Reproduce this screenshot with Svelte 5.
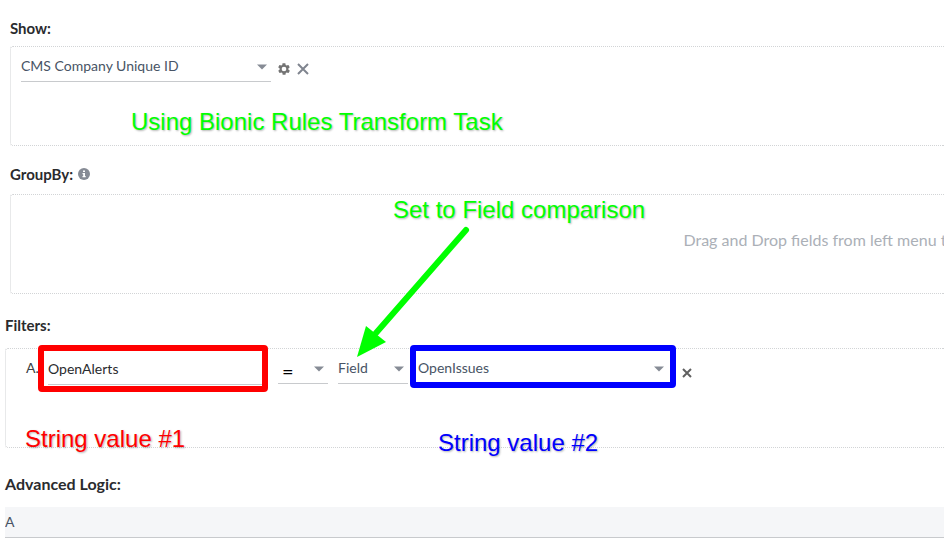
<script lang="ts">
    let showField = $state("CMS Company Unique ID");
    let filterName = $state("OpenAlerts");
    let operator = $state("=");
    let compareTo = $state("Field");
    let compareField = $state("OpenIssues");
    let logic = $state("A");
</script>

{#snippet caret()}
    <svg class="caret" width="10" height="6" viewBox="0 0 10 6" aria-hidden="true">
        <path d="M0 0.5h10L5 5.5z" />
    </svg>
{/snippet}

{#snippet cross(size: number)}
    <svg width={size} height={size} viewBox="0 0 {size} {size}" aria-hidden="true">
        <path d="M1 1L{size - 1} {size - 1}M{size - 1} 1L1 {size - 1}" />
    </svg>
{/snippet}

<main>
    <section class="show">
        <h2>Show:</h2>
        <div class="panel">
            <div class="row">
                <div class="select wide">
                    <select bind:value={showField} aria-label="Show field">
                        <option>CMS Company Unique ID</option>
                    </select>
                    {@render caret()}
                </div>
                <div class="actions">
                    <button class="gear" aria-label="Field settings">
                        <svg width="14" height="14" viewBox="0 0 24 24" aria-hidden="true">
                            <path
                                fill-rule="evenodd"
                                d="M19.4 13c0-.3.1-.6.1-1s0-.7-.1-1l2.1-1.6c.2-.2.3-.4.1-.7l-2-3.4c-.1-.2-.4-.3-.6-.2l-2.5 1c-.5-.4-1.1-.7-1.7-1l-.4-2.6c0-.3-.2-.5-.5-.5h-4c-.2 0-.5.2-.5.4l-.4 2.7c-.6.2-1.1.6-1.7 1L4.9 5.1c-.2-.1-.5 0-.6.2l-2 3.4c-.1.3 0 .6.1.7L4.6 11c0 .3-.1.6-.1 1s0 .7.1 1l-2.1 1.6c-.2.2-.3.4-.1.7l2 3.4c.1.2.4.3.6.2l2.5-1c.5.4 1.1.7 1.7 1l.4 2.6c0 .3.2.5.5.5h4c.3 0 .5-.2.5-.4l.4-2.7c.6-.2 1.2-.6 1.7-1l2.5 1c.2.1.5 0 .6-.2l2-3.4c.1-.2.1-.5-.1-.7zM12 16a4 4 0 1 1 0-8 4 4 0 0 1 0 8z"
                            />
                        </svg>
                    </button>
                    <button class="remove" aria-label="Remove field">{@render cross(12)}</button>
                </div>
            </div>
        </div>
    </section>

    <section class="group">
        <h2>
            GroupBy:
            <svg width="12" height="12" viewBox="0 0 12 12" aria-hidden="true">
                <circle cx="6" cy="6" r="6" fill="#868b95" />
                <path d="M5 2.5h2V4H5zM4.5 5H7v3h.7v1.2H4.5V8h.7V6.2h-.7z" fill="#fff" />
            </svg>
        </h2>
        <div class="panel drop">
            <p>Drag and Drop fields from left menu to</p>
        </div>
    </section>

    <section class="filters">
        <h2>Filters:</h2>
        <div class="panel">
            <div class="row">
                <label for="filter-a">A.</label>
                <input id="filter-a" type="text" bind:value={filterName} />
                <div class="select operator">
                    <select bind:value={operator} aria-label="Operator">
                        <option>=</option>
                    </select>
                    {@render caret()}
                </div>
                <div class="select kind">
                    <select bind:value={compareTo} aria-label="Compare to">
                        <option>Field</option>
                    </select>
                    {@render caret()}
                </div>
                <div class="select wide">
                    <select bind:value={compareField} aria-label="Comparison field">
                        <option>OpenIssues</option>
                    </select>
                    {@render caret()}
                </div>
                <button class="remove bold" aria-label="Remove filter">{@render cross(10)}</button>
            </div>
        </div>
    </section>

    <section class="logic">
        <h2><label for="logic">Advanced Logic:</label></h2>
        <input id="logic" type="text" bind:value={logic} />
    </section>

    <!-- callouts drawn over the form -->
    <div class="note task">Using Bionic Rules Transform Task</div>
    <div class="note comparison">Set to Field comparison</div>
    <div class="note first">String value #1</div>
    <div class="note second">String value #2</div>
    <div class="frame red"></div>
    <div class="frame blue"></div>
    <svg class="arrow" width="120" height="136" viewBox="0 0 120 136" aria-hidden="true">
        <path d="M116 8L26 111" stroke="#0f0" stroke-width="6" stroke-linecap="round" />
        <path d="M7 135l9-31 20 16z" fill="#0f0" />
    </svg>
</main>

<style>
    :global(body) {
        margin: 0;
        background: #fff;
    }
    main {
        position: relative;
        padding-top: 18px;
        overflow: hidden;
        font-family: Lato, "Open Sans", sans-serif;
        font-size: 14px;
        color: #485465;
    }
    h2 {
        display: flex;
        align-items: center;
        gap: 5px;
        margin: 0;
        font-size: 15px;
        line-height: 20px;
        font-weight: 700;
        color: #2a2b2e;
    }
    .panel {
        box-sizing: border-box;
        height: 100px;
        padding: 5px 0 0 10px;
        border: 1px dotted #d2d4d6;
        border-right: none;
        border-radius: 3px 0 0 3px;
    }
    .show,
    .group {
        margin-left: 10px;
    }
    .filters,
    .logic {
        margin-left: 5px;
    }
    .show .panel {
        margin: 8px 0 18px;
    }
    .group .panel {
        margin: 10px 0 21px;
    }
    .filters .panel {
        margin: 13px 0 26px;
        padding-left: 20px;
    }
    .drop {
        display: flex;
        align-items: center;
        padding: 0 0 8px 72%;
    }
    .drop p {
        margin: 0;
        font-size: 16px;
        line-height: 20px;
        white-space: nowrap;
        color: #abb0b7;
    }
    .row {
        display: flex;
        align-items: flex-start;
        gap: 10px;
    }
    .row label {
        width: 12px;
        line-height: 28px;
        color: #3c3f45;
    }
    select,
    input {
        box-sizing: border-box;
        display: block;
        width: 100%;
        height: 30px;
        margin: 0;
        padding: 0 0 2px;
        border: none;
        border-bottom: 1px solid #c8cacd;
        border-radius: 0;
        background: transparent;
        font: inherit;
        color: inherit;
        outline: none;
        appearance: none;
    }
    .select {
        position: relative;
        flex: none;
    }
    .wide {
        width: 250px;
    }
    .operator {
        width: 50px;
    }
    .operator select {
        padding: 4px 0 0 4px;
        font-size: 20px;
        color: #000;
    }
    .kind {
        width: 70px;
    }
    .caret {
        position: absolute;
        top: 12px;
        right: 4px;
        fill: #868b95;
        pointer-events: none;
    }
    .row input {
        flex: none;
        width: 220px;
        height: 31px;
        color: #2a2b2e;
    }
    button {
        display: flex;
        align-items: center;
        padding: 0;
        border: none;
        background: none;
    }
    .actions {
        display: flex;
        align-items: center;
        gap: 6px;
        height: 34px;
        margin-left: -4px;
    }
    .gear {
        fill: #747474;
    }
    .remove {
        stroke: #80858f;
        stroke-width: 2;
    }
    .bold {
        height: 38px;
        margin-left: 4px;
        stroke: #606060;
    }
    .logic h2 {
        font-size: 16px;
    }
    .logic input {
        height: 31px;
        margin-top: 13px;
        background: #f5f6f8;
    }
    .note {
        position: absolute;
        font-family: "Liberation Sans", Arial, sans-serif;
        font-size: 24px;
        line-height: 28px;
        white-space: nowrap;
        text-shadow: 1px 1px 2px rgba(0, 0, 0, 0.3);
    }
    .task {
        top: 108px;
        left: 131px;
        color: #0f0;
    }
    .comparison {
        top: 196px;
        left: 393px;
        color: #0f0;
    }
    .first {
        top: 425px;
        left: 25px;
        color: #f00;
    }
    .second {
        top: 429px;
        left: 438px;
        color: #00f;
    }
    .frame {
        position: absolute;
        box-sizing: border-box;
        top: 345px;
        border: 6px solid;
        border-radius: 4px;
        pointer-events: none;
    }
    .red {
        left: 38px;
        width: 230px;
        height: 47px;
        border-color: #f00;
    }
    .blue {
        left: 410px;
        width: 266px;
        height: 43px;
        border-color: #00f;
    }
    .arrow {
        position: absolute;
        top: 222px;
        left: 350px;
        pointer-events: none;
    }
</style>
